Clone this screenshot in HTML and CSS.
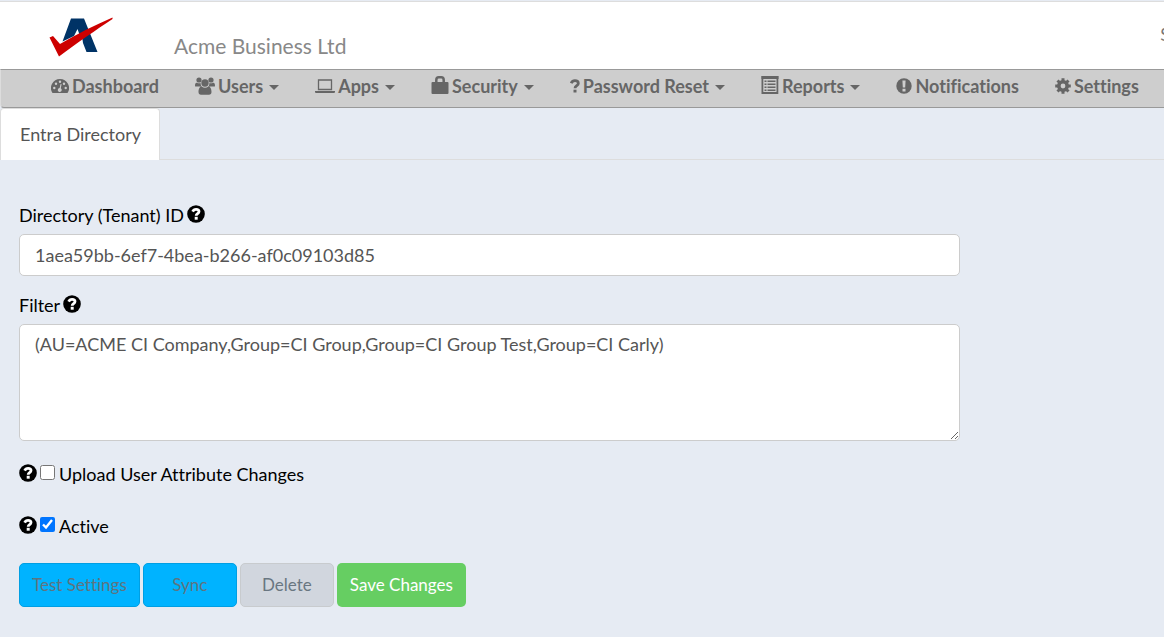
FILE: index.html
```html
<!DOCTYPE html>
<html lang="en">
<head>
    <meta charset="UTF-8">
    <meta name="viewport" content="width=device-width, initial-scale=1.0">
    <title>Entra Directory</title>
    <link rel="stylesheet" href="styles.css">
</head>
<body>
    <!-- Shared icons -->
    <svg class="icon-defs" aria-hidden="true">
        <symbol id="icon-help" viewBox="0 0 18 18">
            <circle cx="9" cy="9" r="8.8"/>
            <path fill="none" stroke="#fff" stroke-width="2.8" d="M5.700 6.600C6.400 4.900 7.600 4.300 9.100 4.300c1.700 0 2.900 1 2.900 2.300 0 2-2.800 2.100-2.800 4.100"/>
            <path fill="#fff" d="M7.700 11.800h3v2.900h-3z"/>
        </symbol>
    </svg>

    <header class="header">
        <a href="#" class="logo" aria-label="Home">
            <svg width="66" height="40" viewBox="0 0 66 40">
                <path fill="#003366" d="M22 1.500h13L48.500 35H37.500L34 26l-1-7-2.500-1.500L28.500 12l-3.500 7-11.500 5.500z"/>
                <path fill="#cd0000" d="M.5 20.500l3.500-1.500 7 8C28 17 46 8 63.500.5V2C47 13 28 26 10 39.500z"/>
            </svg>
        </a>
        <span class="company">Acme Business Ltd</span>
        <a href="#" class="account">S</a>
    </header>

    <nav class="navbar">
        <a href="#">
            <svg width="18" height="16" viewBox="0 0 18 16"><path fill="currentColor" d="M9 1a9 9 0 0 0-7.500 14h15A9 9 0 0 0 9 1z"/><g fill="#cecece"><circle cx="3.300" cy="10" r="1.200"/><circle cx="5" cy="5.700" r="1.200"/><circle cx="9" cy="3.800" r="1.200"/><circle cx="13" cy="5.700" r="1.200"/><circle cx="14.700" cy="10" r="1.200"/><path d="M9.600 6l1 .3-.8 4a2 2 0 1 1-1.200-.3z"/></g></svg>
            Dashboard
        </a>
        <a href="#" class="dropdown">
            <svg width="20" height="18" viewBox="0 0 20 18"><g fill="currentColor"><circle cx="4" cy="3" r="2.600"/><circle cx="16" cy="3" r="2.600"/><circle cx="10" cy="6" r="3.700"/><path d="M0 9c0-3 .8-3.500 2-3.300 1.300.8 2.500.7 3.600.2 0 1.500.3 2.500 1 3.600H1.200C.5 9.500 0 9.400 0 9zM20 9c0-3-.8-3.500-2-3.300-1.300.8-2.500.7-3.600.2 0 1.500-.3 2.500-1 3.600h5.400c.7 0 1.200-.1 1.200-.5zM3.500 15c0-3 1-5.500 3.200-5.500 2 1.700 4.600 1.700 6.600 0 2.200 0 3.200 2.500 3.200 5.500 0 1.800-1 2.700-2.500 2.700H6c-1.500 0-2.500-.9-2.500-2.700z"/></g></svg>
            Users
        </a>
        <a href="#" class="dropdown">
            <svg width="20" height="16" viewBox="0 0 20 16"><path fill="none" stroke="currentColor" stroke-width="1.300" d="M3.500 2h13v9.500h-13z"/><path fill="currentColor" d="M0 13h20v1c0 .6-.8 1-1.500 1h-17C.8 15 0 14.600 0 14z"/></svg>
            Apps
        </a>
        <a href="#" class="dropdown">
            <svg width="18" height="20" viewBox="0 0 18 20"><path fill="none" stroke="currentColor" stroke-width="2.500" d="M5.300 8V4c0-2 1-2.700 2.500-2.700h2.400c1.500 0 2.500.7 2.500 2.700v4"/><rect x=".5" y="6" width="17" height="12" rx="1" fill="currentColor"/></svg>
            Security
        </a>
        <a href="#" class="dropdown">
            <svg width="10" height="14" viewBox="0 0 10 14"><path fill="none" stroke="currentColor" stroke-width="2.800" d="M1.200 4.300C2 2.500 3.200 1.700 4.900 1.700c2 0 3.400 1.100 3.400 2.700 0 2.300-3.300 2.200-3.300 4.900"/><path fill="currentColor" d="M3.500 10.700h3v2.800h-3z"/></svg>
            Password Reset
        </a>
        <a href="#" class="dropdown">
            <svg width="18" height="20" viewBox="0 0 18 20"><path fill="none" stroke="currentColor" stroke-width="1.800" d="M1.400 1h15v16h-15z"/><path fill="currentColor" d="M.5 0h17v3H.5zM3.500 4.500h2V6h-2zm3 0h8V6h-8zm-3 3h2V9h-2zm3 0h8V9h-8zm-3 3h2V12h-2zm3 0h8V12h-8zm-3 3h2V15h-2zm3 0h8V15h-8z"/></svg>
            Reports
        </a>
        <a href="#">
            <svg width="16" height="16" viewBox="0 0 16 16"><circle cx="8" cy="8" r="7.700" fill="currentColor"/><path fill="#cecece" d="M6.400 2.500h3.200L9.200 9.500H6.800zM6.500 10.800h3v2.700h-3z"/></svg>
            Notifications
        </a>
        <a href="#">
            <svg width="16" height="16" viewBox="0 0 16 16"><circle cx="8" cy="8" r="4.200" fill="none" stroke="currentColor" stroke-width="3.600"/><path fill="none" stroke="currentColor" stroke-width="3" d="M8 .2v3M8 12.800v3M.2 8h3M12.800 8h3M2.500 2.500l2 2M11.500 11.500l2 2M2.500 13.500l2-2M11.500 4.500l2-2"/></svg>
            Settings
        </a>
    </nav>

    <div class="tabs">
        <a href="#" class="tab active">Entra Directory</a>
    </div>

    <form class="directory-form">
        <div class="form-group">
            <div class="field-label">
                <label for="tenant-id">Directory (Tenant) ID</label>
                <svg class="help"><use href="#icon-help"/></svg>
            </div>
            <input type="text" class="form-control" id="tenant-id" value="1aea59bb-6ef7-4bea-b266-af0c09103d85">
        </div>

        <div class="form-group">
            <div class="field-label">
                <label for="filter">Filter</label>
                <svg class="help"><use href="#icon-help"/></svg>
            </div>
            <textarea class="form-control" id="filter" rows="4">(AU=ACME CI Company,Group=CI Group,Group=CI Group Test,Group=CI Carly)</textarea>
        </div>

        <div class="check-row">
            <svg class="help"><use href="#icon-help"/></svg>
            <input type="checkbox" id="upload-changes">
            <label for="upload-changes">Upload User Attribute Changes</label>
        </div>
        <div class="check-row">
            <svg class="help"><use href="#icon-help"/></svg>
            <input type="checkbox" id="active" checked>
            <label for="active">Active</label>
        </div>

        <div class="buttons">
            <button type="button" class="btn btn-info">Test Settings</button>
            <button type="button" class="btn btn-info">Sync</button>
            <button type="button" class="btn btn-default">Delete</button>
            <button type="submit" class="btn btn-success">Save Changes</button>
        </div>
    </form>
</body>
</html>
```

FILE: styles.css
```css
/* General styling */
* {
    box-sizing: border-box;
}
body {
    margin: 0;
    padding-top: 1px;
    background-color: #e6ebf3;
    font-family: Lato, sans-serif;
    font-size: 18px;
    font-variant-ligatures: none;
    line-height: 26px;
    color: #000;
    overflow-x: hidden;
}
a {
    text-decoration: none;
}
.icon-defs {
    display: none;
}

/* Header */
.header {
    display: flex;
    height: 68px;
    padding-left: 49px;
    background-color: #fff;
    border-top: 1px solid #ddd;
    overflow: hidden;
}
.logo {
    width: 125px;
    padding-top: 15px;
}
.company {
    padding-top: 31px;
    font-size: 21px;
    color: #888;
}
.account {
    margin-left: auto;
    margin-right: -6px;
    padding-top: 19px;
    color: #777;
}

/* Navigation */
.navbar {
    display: flex;
    gap: 36px;
    height: 39px;
    padding: 0 26px 6px 50px;
    background-color: #cecece;
    border: 1px solid #999;
    border-right: 0;
    border-left-color: #ddd;
    border-radius: 0 0 0 4px;
}
.navbar a {
    display: flex;
    align-items: center;
    gap: 3px;
    font-weight: bold;
    color: #666;
    white-space: nowrap;
}
.dropdown::after {
    content: "";
    margin: 4px 0 0 3px;
    border-top: 5px solid #666;
    border-left: 5px solid transparent;
    border-right: 5px solid transparent;
}

/* Tabs */
.tabs {
    display: flex;
    height: 52px;
    border-bottom: 1px solid #ddd;
}
.tab {
    height: 52px;
    padding: 12px 18px 13px 19px;
    background-color: #fff;
    border: 1px solid #ddd;
    border-bottom: 0;
    border-radius: 4px 4px 0 0;
    color: #555;
}

/* Form */
.directory-form {
    max-width: 979px;
    padding: 42px 19px 0;
}
.form-group {
    margin-bottom: 16px;
}
.field-label {
    display: flex;
    gap: 3px;
    margin-bottom: 6px;
}
.help {
    width: 18px;
    height: 18px;
    margin-top: 3px;
}
.form-control {
    display: block;
    width: 100%;
    padding: 7px 15px;
    border: 1px solid #ccc;
    border-radius: 5px;
    background-color: #fff;
    font: inherit;
    color: #555;
}
.form-control:focus {
    outline: none;
    border-color: #66afe9;
}
textarea.form-control {
    height: 117px;
    padding-top: 6px;
    resize: vertical;
}
.check-row {
    display: flex;
    margin: 20px 0 26px;
}
.check-row input {
    width: 15px;
    height: 15px;
    margin: 4px 4px 0 3px;
}

/* Buttons */
.buttons {
    display: flex;
    gap: 3px;
    margin-top: -2px;
}
.btn {
    min-width: 94px;
    height: 44px;
    padding: 0 12px;
    border: 1px solid transparent;
    border-radius: 5px;
    font: inherit;
    font-size: 17px;
    cursor: pointer;
}
.btn-info {
    background-color: #00b3ff;
    border-color: #009fe3;
    color: #5f747f;
}
.btn-default {
    background-color: #d1d6de;
    border-color: #c8cbce;
    color: #697681;
}
.btn-success {
    background-color: #66ce62;
    color: #fff;
}
```
